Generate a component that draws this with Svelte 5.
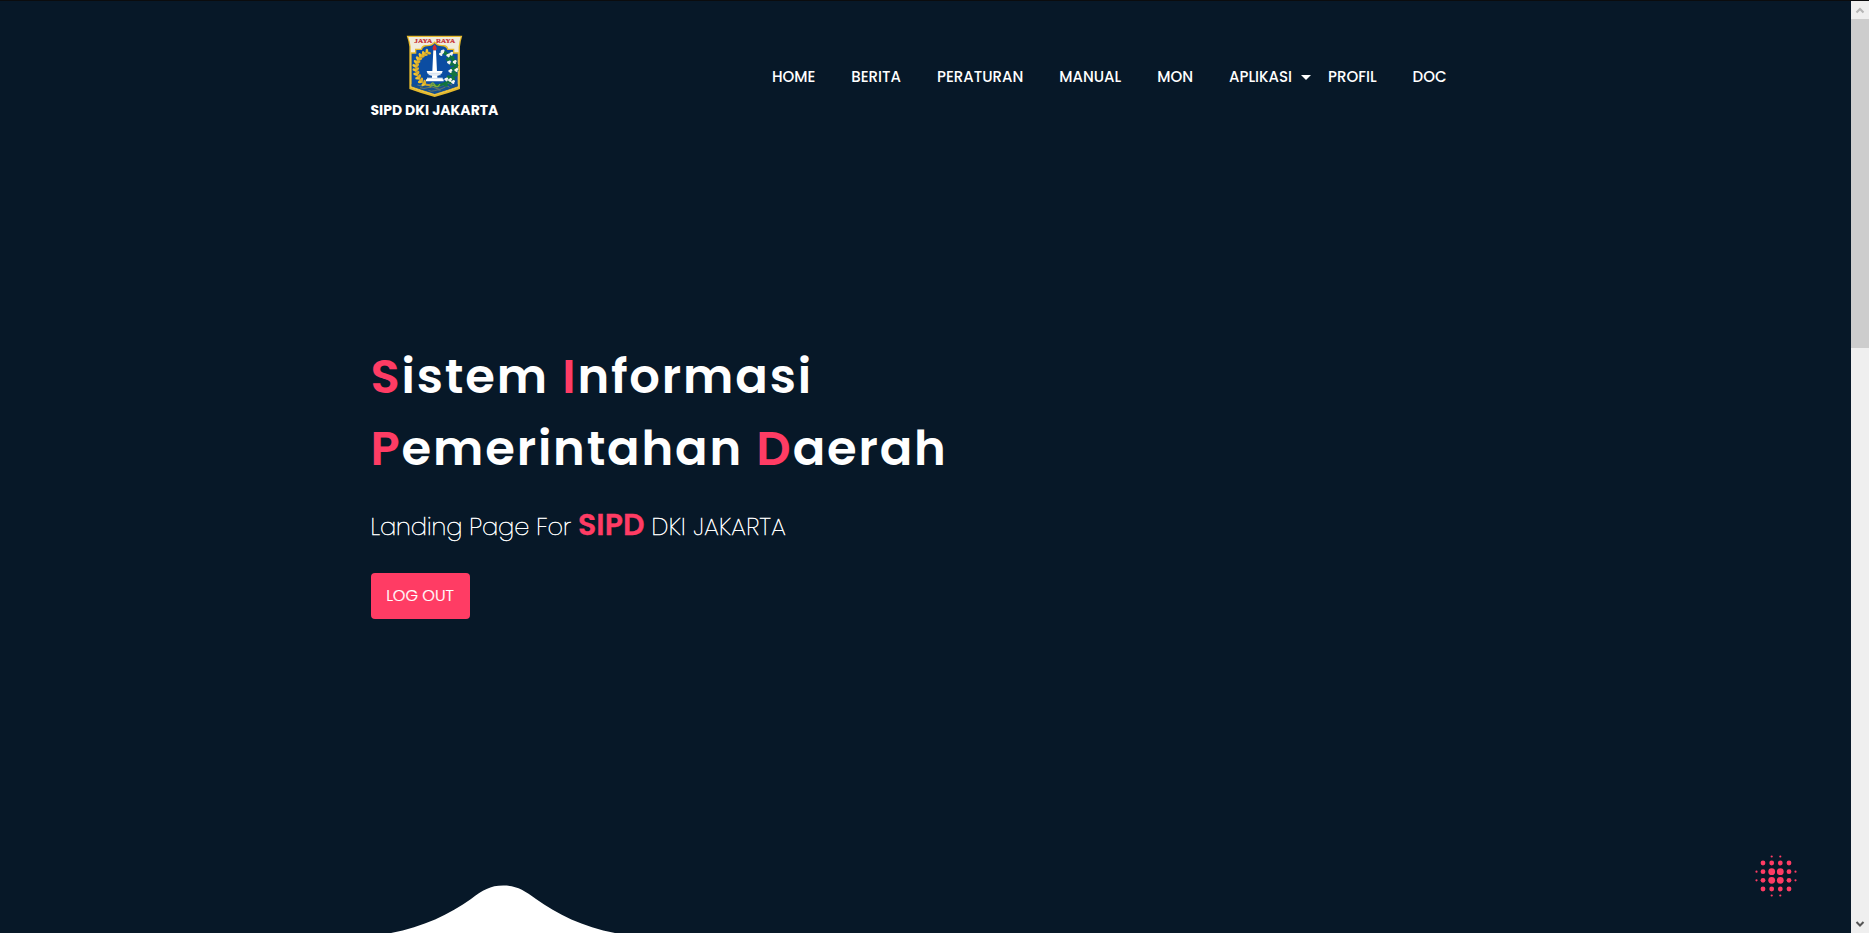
<script>
  const menu = ['HOME', 'BERITA', 'PERATURAN', 'MANUAL', 'MON', 'APLIKASI', 'PROFIL', 'DOC'];

  // Grid of the loader dots: offsets from the centre and the radius of each.
  const steps = [-19.5, -13, -4.3, 4.3, 13, 19.5];
  const dots = [];
  steps.forEach((y, r) =>
    steps.forEach((x, c) => {
      const edgeR = Math.min(r, 5 - r);
      const edgeC = Math.min(c, 5 - c);
      if (edgeR + edgeC < 2) return;
      const radius = edgeR === 0 || edgeC === 0 ? 1.1 : edgeR === 2 && edgeC === 2 ? 3.4 : 2.4;
      dots.push({ x, y, radius });
    })
  );

  const grains = [
    [199, 84, -50], [189, 90, -40], [180, 96, -30], [173, 105, -20], [168, 115, -8], [165, 126, 2],
    [166, 138, 12], [169, 150, 24], [175, 161, 36], [183, 171, 48], [193, 178, 60],
  ];
  const leaves = [
    [254, 86], [266, 90], [276, 99], [283, 110], [287, 122], [288, 136], [285, 150], [278, 162], [268, 172],
    [256, 180], [262, 104], [272, 118], [276, 132], [274, 146], [264, 158],
  ];
  const blooms = [[241, 88], [246, 80], [263, 92], [272, 87], [265, 113], [282, 112], [269, 139], [287, 136], [257, 164], [268, 166], [277, 172]];
</script>

<div class="page">
  <main>
    <div class="container">
      <header>
        <a class="brand" href="#home">
          <svg class="crest" viewBox="136 31 172 187" aria-hidden="true">
            <path d="M138 33H305Q300 48 298 66V193L263 205L222 217L181 205L146 193V66Q144 48 138 33Z" fill="#e5b92b" />
            <path d="M143 37H300Q296 50 294 66V188L261 199L222 210L183 199L150 188V66Q148 50 143 37Z" fill="#f0ecdc" />
            <path d="M150 188V83H163V72H181Q184 59 198 61Q213 62 222 50Q231 62 246 61Q260 59 263 72H281V83H294V188L261 199L222 210L183 199Z" fill="#e5b92b" />
            <path d="M153 185V87H167V76H184Q187 65 200 65Q215 65 222 56Q229 65 244 65Q257 65 260 76H277V87H291V185L260 195L222 208L184 195Z" fill="#0b4da2" />
            <path d="M153 178Q187 181 222 185Q257 181 291 178V185L260 195L222 206L184 195L153 185Z" fill="#16508e" />
            <path d="M170 181Q183 187 196 181T222 183T248 181T274 181M178 189Q190 194 202 189T226 191T250 189T266 189M203 197Q212 202 222 198T240 197" fill="none" stroke="#b79c3c" stroke-width="1.6" />
            <path d="M199 82Q170 94 166 124Q164 158 188 175Q198 183 210 182" fill="none" stroke="#c79d2c" stroke-width="6" />
            {#each grains as [x, y, a]}
              <g transform="translate({x} {y}) rotate({-a})">
                <ellipse cx="-5" cy="0" rx="6.5" ry="4" transform="rotate(38)" fill="#f0c52f" />
                <ellipse cx="6" cy="0" rx="6.5" ry="4" transform="rotate(-38)" fill="#e0b12b" />
              </g>
            {/each}
            <path d="M246 82Q284 98 284 130Q282 166 250 177Q236 185 218 182" fill="none" stroke="#12713f" stroke-width="8" />
            {#each leaves as [x, y]}
              <circle cx={x} cy={y} r="6" fill="#11753f" />
            {/each}
            {#each blooms as [x, y]}
              <g fill="#f5f5ec">
                <circle cx={x - 2} cy={y} r="3.7" /><circle cx={x + 2} cy={y - 2} r="3.7" /><circle cx={x + 1} cy={y + 3} r="3.3" />
              </g>
            {/each}
            <path d="M210 181Q216 170 221 179Q229 194 238 178M207 188Q217 176 225 187" fill="none" stroke="#81aa37" stroke-width="4" />
            <path d="M218 77H226L229 139H246Q243 152 230 153V159H246V164H249V170H196V164H199V159H214V153Q201 152 198 139H215Z" fill="#fff" />
            <path d="M199 146H245M203 151H241M199 161H246" stroke="#9bb7d9" stroke-width="1.5" />
            <path d="M222 59Q232 72 226 77H218Q212 70 222 59Z" fill="#d52d2c" />
            <g class="motto">
              <text x="161" y="54" textLength="54" lengthAdjust="spacingAndGlyphs">JAYA</text>
              <text x="226" y="54" textLength="57" lengthAdjust="spacingAndGlyphs">RAYA</text>
            </g>
          </svg>
          <span>SIPD DKI JAKARTA</span>
        </a>
        <nav>
          {#each menu as label}
            <a href="#{label.toLowerCase()}" class:dropdown={label === 'APLIKASI'}>{label}</a>
          {/each}
        </nav>
      </header>

      <section class="hero">
        <h1><em>S</em>istem <em>I</em>nformasi<br /><em>P</em>emerintahan <em>D</em>aerah</h1>
        <p>Landing Page For <strong>SIPD</strong> <span>DKI JAKARTA</span></p>
        <button>LOG OUT</button>
      </section>
    </div>

    <svg class="hill" viewBox="0 0 224 48" aria-hidden="true">
      <path d="M0 48C32 42 59 29 80 14C92 5 99 .5 112.300 .5C125 .5 133 5 145 14C166 29 192 42 224 48Z" fill="#fff" />
    </svg>
    <svg class="loader" viewBox="-21 -21 42 42" aria-hidden="true">
      {#each dots as d}
        <circle cx={d.x} cy={d.y} r={d.radius} fill="#ff3c64" />
      {/each}
    </svg>
  </main>

  <aside class="scrollbar">
    <svg viewBox="0 0 18 18"><path d="M5.500 11.500L9 8L12.500 11.500" stroke="#b5b5b5" /></svg>
    <div class="thumb"></div>
    <svg class="down" viewBox="0 0 18 18"><path d="M5.500 7L9 10.500L12.500 7" stroke="#555" /></svg>
  </aside>
</div>

<style>
  :global(body) { overflow: hidden; }
  .page {
    box-sizing: border-box;
    display: flex;
    height: 933px;
    border-top: 1px solid #0b0c0e;
    background: #071828;
    color: #fff;
    font-family: Poppins, sans-serif;
  }
  main { position: relative; flex: 1; }
  .container { width: 1110px; margin: 0 auto; }
  header { display: flex; align-items: flex-start; padding-top: 34px; height: 86px; }
  a { color: inherit; text-decoration: none; }
  .brand { display: flex; flex-direction: column; align-items: center; font-size: 14px; font-weight: 700; line-height: 21px; white-space: nowrap; }
  .brand span { margin-top: 3px; }
  .crest { display: block; width: 57.3px; height: 62.3px; }
  .motto { font: 700 19px "Liberation Serif", serif; fill: #c72b30; stroke: #c72b30; stroke-width: 0.6px; }
  nav { display: flex; gap: 36px; margin: 31px 0 0 273.500px; font-size: 15px; font-weight: 500; line-height: 22px; }
  .dropdown { position: relative; }
  .dropdown::after {
    content: "";
    position: absolute;
    left: calc(100% + 9px);
    top: 9px;
    border: 5px solid transparent;
    border-top-color: #fff;
    border-bottom: 0;
  }
  .hero { padding-top: 220px; }
  h1 { margin: 0; font-size: 48px; font-weight: 600; line-height: 72px; letter-spacing: 1.85px; }
  em { color: #ff3c64; font-style: normal; }
  p { margin: 17px 0 24px; font-size: 24px; font-weight: 200; line-height: 45px; -webkit-text-stroke: 0.5px #fff; }
  p span { letter-spacing: 0.46px; }
  strong { color: #ff3c64; font-size: 30px; font-weight: 600; -webkit-text-stroke: 0.3px #ff3c64; }
  button { display: block; width: 99px; height: 46px; padding: 0 0 2px; border: 0; border-radius: 4px; background: #ff3c64; color: #fff; font: 300 16px Poppins, sans-serif; -webkit-text-stroke: 0.2px #fff; }
  .hill { position: absolute; left: 391px; bottom: 0; width: 224px; height: 48px; }
  .loader { position: absolute; left: 1754.500px; top: 854px; width: 42px; height: 42px; }
  .scrollbar { display: flex; flex-direction: column; width: 18px; background: #efefef; }
  .scrollbar svg { width: 18px; height: 18px; fill: none; stroke-width: 2; }
  .thumb { height: 329px; background: #cdcdcd; }
  .down { margin-top: auto; }
</style>
